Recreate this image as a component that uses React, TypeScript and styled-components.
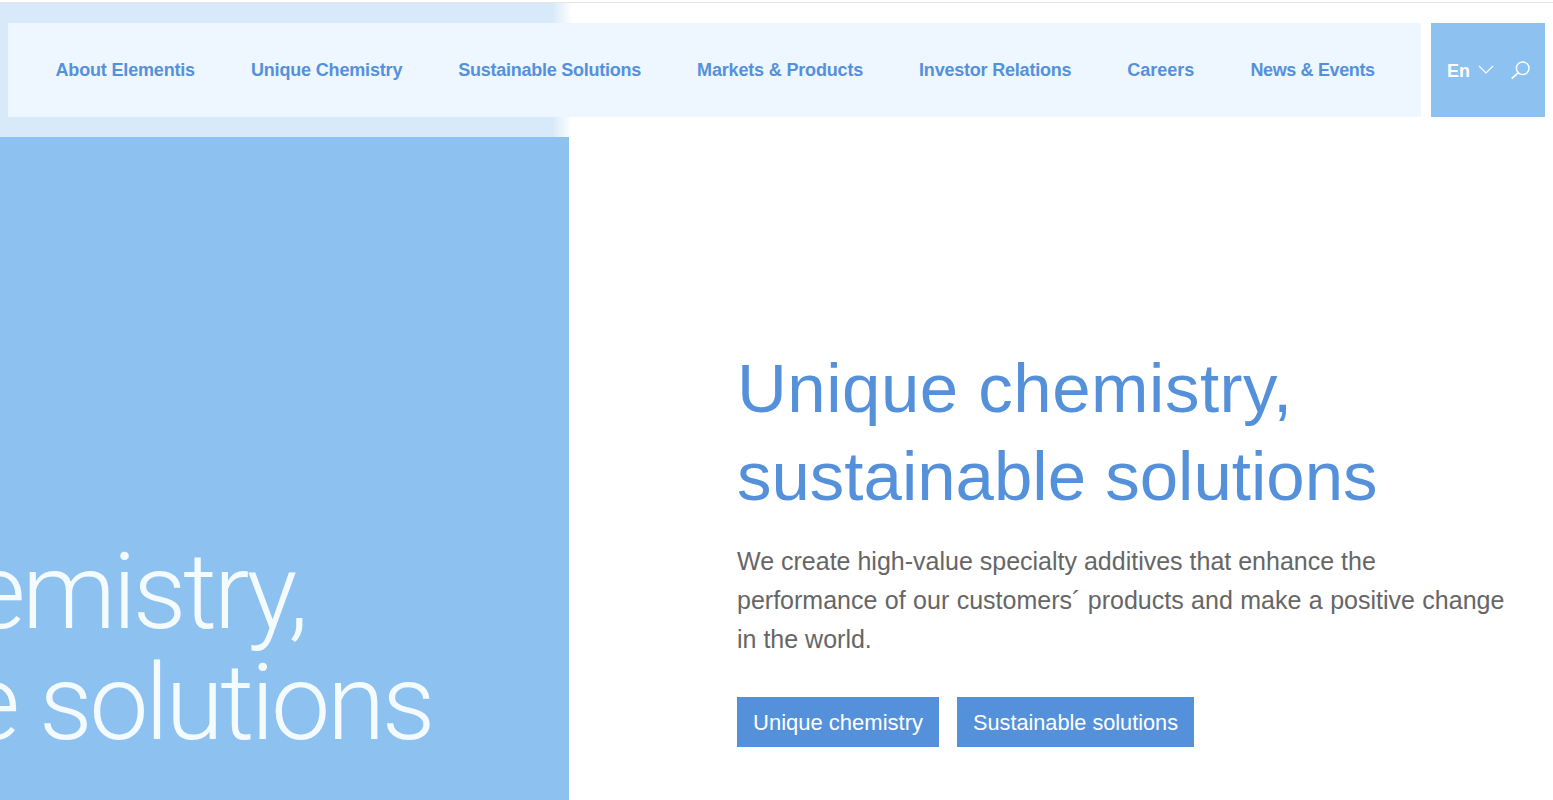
import React from "react";
import styled, { createGlobalStyle } from "styled-components";

const Global = createGlobalStyle`
  html, body { margin: 0; padding: 0; background: #fff; overflow: hidden; }
  body { font-family: "Liberation Sans", Arial, sans-serif; }
  * { box-sizing: border-box; }
`;

const Page = styled.div`
  width: 1553px;
  height: 800px;
  overflow: hidden;
  display: flex;
  flex-direction: column;
`;

const TopRule = styled.div`
  height: 3px;
  flex: none;
  background: linear-gradient(#fff 0 2px, #e5e5e5 2px 3px);
`;

const Header = styled.header`
  position: relative;
  flex: none;
  height: 134px;
  padding: 20px 8px;
  display: flex;
  gap: 10px;
  &::before {
    content: "";
    position: absolute;
    left: 0;
    top: 0;
    bottom: 0;
    width: 572px;
    background: linear-gradient(90deg, #d8eafa 0, #d8eafa 553px, #ffffff 572px);
  }
`;

const Nav = styled.nav`
  position: relative;
  width: 1413px;
  height: 94px;
  background: #eef7ff;
  display: flex;
  align-items: center;
  padding-left: 47.5px;
  gap: 56px;
`;

const NavLink = styled.a<{ $tracking: number }>`
  font-size: 18px;
  font-weight: 700;
  color: #5591db;
  white-space: nowrap;
  letter-spacing: ${(p) => p.$tracking}px;
`;

const Tools = styled.div`
  position: relative;
  width: 114px;
  height: 94px;
  background: #8dc1f0;
  display: flex;
  align-items: center;
  padding-left: 16px;
  color: #fff;
`;

const Lang = styled.span`
  font-size: 18px;
  font-weight: 700;
  color: #fff;
  width: 31px;
  padding-top: 2px;
`;

const Chevron = styled.svg`
  width: 16px;
  height: 10px;
  margin-right: 16px;
`;

const Search = styled.svg`
  width: 20px;
  height: 24px;
`;

const Hero = styled.main`
  flex: 1;
  display: flex;
  min-height: 0;
`;

const Panel = styled.section`
  width: 569px;
  flex: none;
  background: #8dc1f0;
  overflow: hidden;
  padding-top: 400px;
`;

const PanelLine = styled.div<{ $inset: number }>`
  display: flex;
  justify-content: flex-end;
  padding-right: ${(p) => p.$inset}px;
  font-family: Roboto, sans-serif;
  font-weight: 300;
  font-size: 106px;
  line-height: 111px;
  letter-spacing: -3.5px;
  color: #f4fbff;
  white-space: nowrap;
`;

const Copy = styled.section`
  padding: 208px 0 0 168px;
  flex: 1;
`;

const Title = styled.h1`
  margin: 0;
  font-size: 69px;
  line-height: 88px;
  font-weight: 400;
  color: #5591db;
  white-space: nowrap;
`;

const TitleLine = styled.span<{ $tracking: number }>`
  display: block;
  letter-spacing: ${(p) => p.$tracking}px;
`;

const Body = styled.p`
  margin: 21px 0 0;
  width: 775px;
  font-size: 25px;
  line-height: 39px;
  color: #666;
`;

const WideWords = styled.span`
  word-spacing: 0.5px;
`;

const Actions = styled.div`
  display: flex;
  gap: 18px;
  margin-top: 38px;
`;

const Button = styled.a<{ $width: number; $size: number }>`
  width: ${(p) => p.$width}px;
  height: 50px;
  padding-top: 1px;
  display: flex;
  align-items: center;
  justify-content: center;
  background: #5591db;
  color: #fff;
  font-size: ${(p) => p.$size}px;
  white-space: nowrap;
`;

const links = [
  { label: "About Elementis", tracking: -0.17 },
  { label: "Unique Chemistry", tracking: -0.17 },
  { label: "Sustainable Solutions", tracking: -0.25 },
  { label: "Markets & Products", tracking: -0.17 },
  { label: "Investor Relations", tracking: -0.21 },
  { label: "Careers", tracking: 0 },
  { label: "News & Events", tracking: -0.36 },
];

export default function App() {
  return (
    <Page>
      <Global />
      <TopRule />
      <Header>
        <Nav>
          {links.map((l) => (
            <NavLink key={l.label} $tracking={l.tracking}>
              {l.label}
            </NavLink>
          ))}
        </Nav>
        <Tools>
          <Lang>En</Lang>
          <Chevron viewBox="0 0 16 10" fill="none" stroke="#fff" strokeWidth="1.1">
            <path d="M1 1 L8 8 L15 1" />
          </Chevron>
          <Search viewBox="0 0 20 24" fill="none" stroke="#fff" strokeWidth="1.4">
            <circle cx="12.7" cy="10.3" r="6.3" />
            <path d="M8.2 14.8 L1.7 20.5" strokeWidth="1.7" />
          </Search>
        </Tools>
      </Header>
      <Hero>
        <Panel>
          <PanelLine $inset={264}>Unique chemistry,</PanelLine>
          <PanelLine $inset={137}>sustainable solutions</PanelLine>
        </Panel>
        <Copy>
          <Title>
            <TitleLine $tracking={0.5}>Unique chemistry,</TitleLine>
            <TitleLine $tracking={0}>sustainable solutions</TitleLine>
          </Title>
          <Body>
            We create high-value specialty additives that enhance the{" "}
            <WideWords>performance of our customers´ products and make a positive change</WideWords> in the world.
          </Body>
          <Actions>
            <Button $width={202} $size={22}>Unique chemistry</Button>
            <Button $width={237} $size={21.7}>Sustainable solutions</Button>
          </Actions>
        </Copy>
      </Hero>
    </Page>
  );
}
